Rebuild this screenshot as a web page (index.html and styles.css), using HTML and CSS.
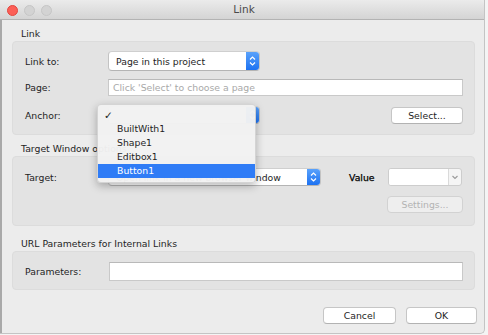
FILE: index.html
```html
<!DOCTYPE html>
<html lang="en">
<head>
  <meta charset="UTF-8" />
  <title>Link</title>
  <link rel="stylesheet" href="styles.css">
</head>
<body>

<div class="window">

  <!-- Title bar -->
  <div class="titlebar">
    <div class="lights">
      <span class="light close"></span>
      <span class="light"></span>
      <span class="light"></span>
    </div>
    <div class="title">Link</div>
  </div>

  <div class="content">

    <!-- Link -->
    <div class="group-label first">Link</div>
    <div class="group group-link">
      <div class="row row-linkto">
        <span class="field-label">Link to:</span>
        <div class="popup popup-short">
          <span class="popup-text">Page in this project</span>
          <span class="stepper">
            <svg width="13" height="18" viewBox="0 0 13 18"><path d="M4 7.5 L6.5 5 L9 7.5 M4 10.5 L6.5 13 L9 10.5" fill="none" stroke="#fff" stroke-width="1.2"/></svg>
          </span>
        </div>
      </div>
      <div class="row row-page">
        <span class="field-label">Page:</span>
        <div class="textfield placeholder">Click 'Select' to choose a page</div>
      </div>
      <div class="row row-anchor">
        <span class="field-label">Anchor:</span>
        <div class="popup popup-short">
          <span class="popup-text"></span>
          <span class="stepper">
            <svg width="13" height="18" viewBox="0 0 13 18"><path d="M4 7.5 L6.5 5 L9 7.5 M4 10.5 L6.5 13 L9 10.5" fill="none" stroke="#fff" stroke-width="1.2"/></svg>
          </span>
        </div>
        <button class="btn btn-select">Select...</button>
      </div>
    </div>

    <!-- Target window -->
    <div class="group-label">Target Window options</div>
    <div class="group group-target">
      <div class="row row-target">
        <span class="field-label">Target:</span>
        <div class="popup popup-long">
          <span class="popup-text">Open link in a new browser window</span>
          <span class="stepper">
            <svg width="13" height="18" viewBox="0 0 13 18"><path d="M4 7.5 L6.5 5 L9 7.5 M4 10.5 L6.5 13 L9 10.5" fill="none" stroke="#fff" stroke-width="1.2"/></svg>
          </span>
        </div>
        <span class="value-label">Value</span>
        <div class="combo">
          <span class="combo-field"></span>
          <span class="combo-arrow">
            <svg width="12" height="16" viewBox="0 0 12 16"><path d="M3.5 7 L6 9.5 L8.5 7" fill="none" stroke="#9a9a9a" stroke-width="1.1"/></svg>
          </span>
        </div>
      </div>
      <div class="row row-settings">
        <button class="btn btn-settings" disabled>Settings...</button>
      </div>
    </div>

    <!-- URL parameters -->
    <div class="group-label third">URL Parameters for Internal Links</div>
    <div class="group group-params">
      <div class="row row-params">
        <span class="field-label">Parameters:</span>
        <div class="textfield textfield-params"></div>
      </div>
    </div>

  </div>

  <!-- Footer -->
  <div class="footer">
    <button class="btn btn-footer">Cancel</button>
    <button class="btn btn-footer">OK</button>
  </div>

  <!-- Anchor menu (open) -->
  <div class="menu">
    <div class="menu-item checked"><span class="check">✓</span></div>
    <div class="menu-item">BuiltWith1</div>
    <div class="menu-item">Shape1</div>
    <div class="menu-item">Editbox1</div>
    <div class="menu-item selected">Button1</div>
  </div>

</div>

</body>
</html>
```

FILE: styles.css
```css
body {
  margin: 0;
  background-color: #f4f4f4;
  font-family: "DejaVu Sans", Verdana, sans-serif;
  font-size: 9.3px;
  color: #1e1e1e;
}

.window {
  position: relative;
  width: 485px;
  height: 334px;
  background-color: #ececec;
  border-right: 1px solid #c4c4c4;
  border-bottom: 1px solid #c4c4c4;
  border-bottom-right-radius: 5px;
  box-sizing: border-box;
  display: flex;
  flex-direction: column;
  overflow: hidden;
}

.window::before {
  content: "";
  position: absolute;
  left: 0;
  top: 20px;
  bottom: 0;
  width: 2px;
  background-color: #a9a9a9;
}

/* Title bar */
.titlebar {
  height: 19px;
  flex-shrink: 0;
  background: linear-gradient(#ebebeb, #d4d4d4);
  border-bottom: 1px solid #b3b3b3;
  border-top-right-radius: 5px;
  display: flex;
  align-items: center;
  position: relative;
}

.lights {
  display: flex;
  gap: 6px;
  padding-left: 7px;
  padding-top: 2px;
}

.light {
  width: 11px;
  height: 11px;
  border-radius: 50%;
  background-color: #d3d3d3;
  border: 1px solid #c6c6c6;
  box-sizing: border-box;
}

.light.close {
  background-color: #fc5f57;
  border-color: #e2463f;
}

.title {
  position: absolute;
  left: 0;
  right: 0;
  text-align: center;
  font-size: 10.5px;
  color: #4a4a4a;
  padding-left: 4px;
  top: 3px;
}

/* Content */
.content {
  padding: 0 9px 0 12px;
}

.group-label {
  height: 14px;
  line-height: 14px;
  padding-left: 9px;
  margin-top: 7px;
}

.group-label.third {
  margin-top: 11px;
}

.group {
  background-color: #e3e3e3;
  border: 1px solid #dcdcdc;
  border-radius: 4px;
  padding: 0 11px 0 12px;
  box-sizing: border-box;
}

.group-link {
  height: 94px;
  padding-top: 9px;
}

.group-target {
  height: 70px;
  padding-top: 11px;
}

.group-params {
  height: 39px;
  padding-top: 10px;
}

.row {
  display: flex;
  align-items: center;
}

.row-linkto { height: 20px; }
.row-page { height: 17px; margin-top: 8px; }
.row-anchor { height: 18px; margin-top: 10px; }
.row-target { height: 18px; }
.row-settings { height: 17px; margin-top: 10px; justify-content: flex-end; }
.row-params { height: 19px; }

.field-label {
  width: 83px;
  flex-shrink: 0;
}

/* Popup buttons */
.popup {
  height: 100%;
  display: flex;
  background-color: #fff;
  border: 1px solid #c3c3c3;
  border-top-color: #cfcfcf;
  border-bottom-color: #b4b4b4;
  border-radius: 4px;
  box-sizing: border-box;
  overflow: hidden;
}

.popup-short { width: 152px; }
.popup-long { width: 213px; }

.popup-text {
  flex-grow: 1;
  padding-left: 7px;
  display: flex;
  align-items: center;
  white-space: nowrap;
  overflow: hidden;
}

.stepper {
  width: 13px;
  flex-shrink: 0;
  background: linear-gradient(#5aa2fb, #1d72f2);
  display: flex;
  align-items: center;
  justify-content: center;
}

/* Text fields */
.textfield {
  flex-grow: 1;
  height: 100%;
  background-color: #fff;
  border: 1px solid #c9c9c9;
  border-top-color: #b9b9b9;
  box-sizing: border-box;
  padding-left: 4px;
  display: flex;
  align-items: center;
}

.placeholder {
  color: #a9a9a9;
}

.textfield-params {
  margin-left: 1px;
}

/* Buttons */
.btn {
  font-family: inherit;
  font-size: inherit;
  color: #1e1e1e;
  background-color: #fff;
  border: 1px solid #c6c6c6;
  border-bottom-color: #b2b2b2;
  border-radius: 4px;
  height: 100%;
  padding: 0;
}

.btn-select {
  width: 72px;
  height: 17px;
  margin-left: auto;
  margin-top: 1px;
}

.btn-settings {
  width: 76px;
  color: #b3b3b3;
  background-color: #eeeeee;
  border-color: #d2d2d2;
}

/* Value combo */
.value-label {
  margin-left: 28px;
  width: 39px;
  color: #000;
  -webkit-text-stroke: 0.25px #000;
}

.combo {
  width: 74px;
  height: 100%;
  display: flex;
  border: 1px solid #cdcdcd;
  border-radius: 3px;
  box-sizing: border-box;
  background-color: #f5f5f5;
  overflow: hidden;
}

.combo-field {
  flex-grow: 1;
  background-color: #fff;
  border-right: 1px solid #dadada;
}

.combo-arrow {
  width: 12px;
  display: flex;
  align-items: center;
}

/* Footer */
.footer {
  display: flex;
  justify-content: flex-end;
  gap: 10px;
  padding-right: 7px;
  margin-top: 17px;
  height: 17px;
}

.btn-footer {
  width: 73px;
}

.btn-footer:last-child {
  width: 71px;
}

/* Open anchor menu */
.menu {
  position: absolute;
  left: 97px;
  top: 104px;
  width: 159px;
  padding: 3px 0 4px;
  background-color: rgba(242, 242, 242, 0.97);
  border: 1px solid rgba(0, 0, 0, 0.12);
  border-radius: 4px;
  box-shadow: 0 3px 9px rgba(0, 0, 0, 0.28);
  box-sizing: border-box;
}

.menu-item {
  height: 14px;
  line-height: 14px;
  padding-left: 19px;
  color: #1e1e1e;
  position: relative;
}

.check {
  position: absolute;
  left: 6px;
  top: 0;
  font-size: 10.5px;
}

.menu-item.selected {
  background-color: #2f7cf6;
  color: #fff;
}
```
